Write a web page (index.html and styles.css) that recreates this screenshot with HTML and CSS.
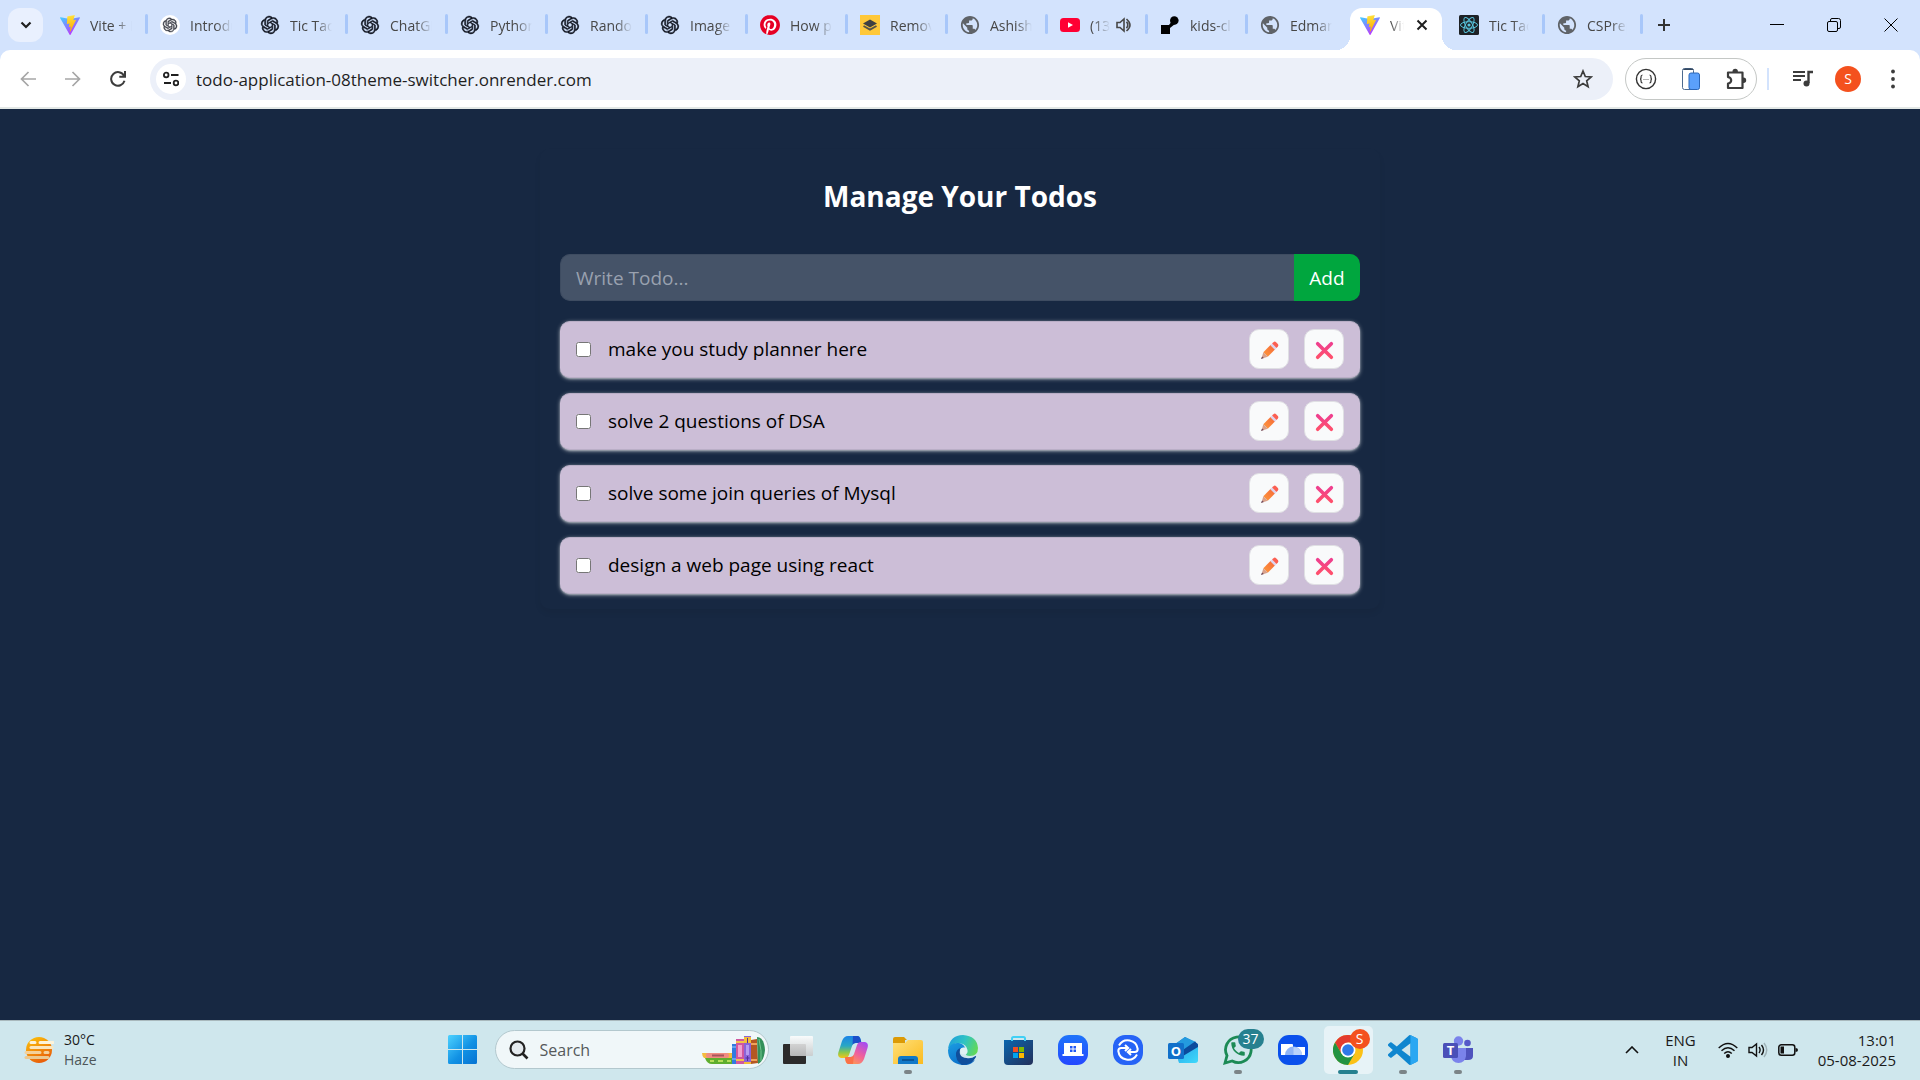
FILE: index.html
```html
<!DOCTYPE html>
<html lang="en">
<head>
<meta charset="utf-8">
<title>Manage Your Todos</title>
<link rel="stylesheet" href="styles.css">
</head>
<body>
<svg class="sprite" aria-hidden="true">
  <defs>
    <linearGradient id="g-vite" x1="0" y1="0" x2=".6" y2="1"><stop offset="0" stop-color="#41d1ff"/><stop offset="1" stop-color="#bd34fe"/></linearGradient>
    <linearGradient id="g-bolt" x1=".4" y1="0" x2=".5" y2="1"><stop offset="0" stop-color="#ffea83"/><stop offset=".1" stop-color="#ffdd35"/><stop offset="1" stop-color="#ffa800"/></linearGradient>
    <linearGradient id="g-pencil" x1="0" y1="1" x2="1" y2="0"><stop offset="0" stop-color="#ff9a3c"/><stop offset="1" stop-color="#f4663a"/></linearGradient>
    <linearGradient id="g-cross" x1="0" y1="0" x2="0" y2="1"><stop offset="0" stop-color="#ef3f8e"/><stop offset="1" stop-color="#ff4f6c"/></linearGradient>
    <linearGradient id="g-sun" x1="0" y1="0" x2=".5" y2="1"><stop offset="0" stop-color="#fdc70b"/><stop offset="1" stop-color="#e9600a"/></linearGradient>
    <linearGradient id="g-win" gradientUnits="userSpaceOnUse" x1="0" y1="0" x2="29" y2="29"><stop offset="0" stop-color="#4dd2ff"/><stop offset=".55" stop-color="#1191e4"/><stop offset="1" stop-color="#0672d2"/></linearGradient>
    <linearGradient id="g-cop1" x1="0" y1="0" x2="0" y2="1"><stop offset="0" stop-color="#1b84e8"/><stop offset=".45" stop-color="#29a7c4"/><stop offset=".75" stop-color="#8cc84b"/><stop offset="1" stop-color="#f5c518"/></linearGradient>
    <linearGradient id="g-cop2" x1=".8" y1="0" x2=".2" y2="1"><stop offset="0" stop-color="#a64df0"/><stop offset=".5" stop-color="#f0609c"/><stop offset="1" stop-color="#ffa04d"/></linearGradient>
    <linearGradient id="g-folder" x1="0" y1="0" x2="1" y2="1"><stop offset="0" stop-color="#ffe07a"/><stop offset="1" stop-color="#fbbb1e"/></linearGradient>
    <linearGradient id="g-edge1" x1="0" y1=".3" x2="1" y2=".6"><stop offset="0" stop-color="#1f9fdc"/><stop offset=".5" stop-color="#2fc3c4"/><stop offset="1" stop-color="#63d957"/></linearGradient>
    <linearGradient id="g-edge2" x1="0" y1="0" x2=".6" y2="1"><stop offset="0" stop-color="#1b9de2"/><stop offset="1" stop-color="#0a6cc8"/></linearGradient>
    <linearGradient id="g-store" x1="0" y1="0" x2="1" y2="1"><stop offset="0" stop-color="#0b66ae"/><stop offset="1" stop-color="#23305a"/></linearGradient>
    <linearGradient id="g-blue" x1="0" y1="0" x2="0" y2="1"><stop offset="0" stop-color="#1f74fa"/><stop offset="1" stop-color="#2448ff"/></linearGradient>
    <linearGradient id="g-out" x1="0" y1="0" x2="1" y2="1"><stop offset="0" stop-color="#28a9ea"/><stop offset="1" stop-color="#3fd9fb"/></linearGradient>
    <linearGradient id="g-task" x1="0" y1="0" x2="0" y2="1"><stop offset="0" stop-color="#fefefe"/><stop offset="1" stop-color="#c9cacb"/></linearGradient>
  </defs>
  <symbol id="vite" viewBox="0 0 256 257">
    <path fill="url(#g-vite)" d="M255.153 37.938L134.897 252.976c-2.483 4.44-8.862 4.466-11.382.048L.875 37.958c-2.746-4.814 1.371-10.646 6.827-9.67l120.385 21.517a6.537 6.537 0 0 0 2.322-.004l117.867-21.483c5.438-.991 9.574 4.796 6.877 9.62Z"/>
    <path fill="url(#g-bolt)" d="M185.432.063L96.44 17.501a3.268 3.268 0 0 0-2.634 3.014l-5.474 92.456a3.268 3.268 0 0 0 3.997 3.378l24.777-5.718c2.318-.535 4.413 1.507 3.936 3.838l-7.361 36.047c-.495 2.426 1.782 4.5 4.151 3.78l15.304-4.649c2.372-.72 4.652 1.36 4.15 3.788l-11.698 56.621c-.732 3.542 3.979 5.473 5.943 2.437l1.313-2.028l72.516-144.72c1.215-2.423-.88-5.186-3.54-4.672l-25.505 4.922c-2.396.462-4.435-1.77-3.759-4.114l16.646-57.705c.677-2.35-1.37-4.583-3.769-4.113Z"/>
  </symbol>
  <symbol id="knot" viewBox="-1.500 -1.500 27 27">
    <path d="M22.2819 9.8211a5.9847 5.9847 0 0 0-.5157-4.9108 6.0462 6.0462 0 0 0-6.5098-2.9A6.0651 6.0651 0 0 0 4.9807 4.1818a5.9847 5.9847 0 0 0-3.9977 2.9 6.0462 6.0462 0 0 0 .7427 7.0966 5.98 5.98 0 0 0 .511 4.9107 6.051 6.051 0 0 0 6.5146 2.9001A5.9847 5.9847 0 0 0 13.2599 24a6.0557 6.0557 0 0 0 5.7718-4.2058 5.9894 5.9894 0 0 0 3.9977-2.9001 6.0557 6.0557 0 0 0-.7475-7.0729zm-9.022 12.6081a4.4755 4.4755 0 0 1-2.8764-1.0408l.1419-.0804 4.7783-2.7582a.7948.7948 0 0 0 .3927-.6813v-6.7369l2.02 1.1686a.071.071 0 0 1 .038.052v5.5826a4.504 4.504 0 0 1-4.4945 4.4944zm-9.6607-4.1254a4.4708 4.4708 0 0 1-.5346-3.0137l.142.0852 4.783 2.7582a.7712.7712 0 0 0 .7806 0l5.8428-3.3685v2.3324a.0804.0804 0 0 1-.0332.0615L9.74 19.9502a4.4992 4.4992 0 0 1-6.1408-1.6464zM2.3408 7.8956a4.485 4.485 0 0 1 2.3655-1.9728V11.6a.7664.7664 0 0 0 .3879.6765l5.8144 3.3543-2.0201 1.1685a.0757.0757 0 0 1-.071 0l-4.8303-2.7865A4.504 4.504 0 0 1 2.3408 7.872zm16.5963 3.8558L13.1038 8.364 15.1192 7.2a.0757.0757 0 0 1 .071 0l4.8303 2.7913a4.4944 4.4944 0 0 1-.6765 8.1042v-5.6772a.79.79 0 0 0-.407-.667zm2.0107-3.0231l-.142-.0852-4.7735-2.7818a.7759.7759 0 0 0-.7854 0L9.409 9.2297V6.8974a.0662.0662 0 0 1 .0284-.0615l4.8303-2.7866a4.4992 4.4992 0 0 1 6.6802 4.66zM8.3065 12.863l-2.02-1.1638a.0804.0804 0 0 1-.038-.0567V6.0742a4.4992 4.4992 0 0 1 7.3757-3.4537l-.142.0805L8.704 5.459a.7948.7948 0 0 0-.3927.6813zm1.0976-2.3654l2.602-1.4998 2.6069 1.4998v2.9994l-2.5974 1.4997-2.6067-1.4997Z" fill="#10141f" stroke="#10141f" stroke-width=".7"/>
  </symbol>
  <symbol id="globe" viewBox="1 1 22 22"><path fill="#5f6368" d="M12 2C6.48 2 2 6.480 2 12s4.480 10 10 10 10-4.480 10-10S17.520 2 12 2zm-1 17.930c-3.950-.490-7-3.850-7-7.930 0-.620.080-1.210.210-1.790L9 15v1c0 1.100.9 2 2 2v1.930zm6.900-2.540c-.260-.810-1-1.390-1.900-1.390h-1v-3c0-.550-.450-1-1-1H8v-2h2c.550 0 1-.450 1-1V7h2c1.100 0 2-.9 2-2v-.410c2.930 1.190 5 4.060 5 7.410 0 2.080-.8 3.970-2.100 5.390z"/></symbol>
  <symbol id="pencil" viewBox="0 0 20 20">
    <path d="M3.500 11.800 8.200 16.500 16 8.700 11.300 4Z" fill="url(#g-pencil)"/>
    <path d="M3.500 11.800 8.200 16.500 1.500 18.700Z" fill="#d9a08a"/><path d="M2.200 16.200 4 17.900 1 19Z" fill="#6b4a5e"/>
    <path d="M10.900 4.400 15.600 9.100 17.400 7.300 12.700 2.600Z" fill="#dcd3ee"/>
    <path d="M12.700 2.600 14.200 1.200Q15.600 0 16.900 1.200L18.800 3.100Q20 4.500 18.800 5.900L17.400 7.300Z" fill="#fb5f52"/>
  </symbol>
  <symbol id="cross" viewBox="0 0 20 20"><path d="M2.800 2.800 17.200 17.200M17.200 2.800 2.800 17.200" fill="none" stroke="url(#g-cross)" stroke-width="3.800" stroke-linecap="round"/></symbol>
</svg>

<header class="browser">
  <div class="tabstrip">
    <button class="tab-search" aria-label="Search tabs"><svg width="12" height="8" viewBox="0 0 12 8"><path d="M1.500 1.500 6 6l4.500-4.500" fill="none" stroke="#1f1f1f" stroke-width="2.200"/></svg></button>
    <nav class="tabs" aria-label="Tabs">
      <button class="tab"><svg class="fav"><use href="#vite"/></svg><span class="tab-label">Vite + React</span></button>
      <button class="tab"><svg class="fav" viewBox="0 0 20 20"><circle cx="10" cy="10" r="10" fill="#fff"/><use href="#knot" x="2" y="2" width="16" height="16" opacity=".8"/></svg><span class="tab-label">Introduction</span></button>
      <button class="tab"><svg class="fav"><use href="#knot"/></svg><span class="tab-label">Tic Tac Toe</span></button>
      <button class="tab"><svg class="fav"><use href="#knot"/></svg><span class="tab-label">ChatGPT</span></button>
      <button class="tab"><svg class="fav"><use href="#knot"/></svg><span class="tab-label">Python</span></button>
      <button class="tab"><svg class="fav"><use href="#knot"/></svg><span class="tab-label">Random</span></button>
      <button class="tab"><svg class="fav"><use href="#knot"/></svg><span class="tab-label">Image</span></button>
      <button class="tab"><svg class="fav" viewBox="0 0 24 24"><circle cx="12" cy="12" r="11.500" fill="#fff"/><path fill="#e60023" d="M12.017 0C5.396 0 .029 5.367.029 11.987c0 5.079 3.158 9.417 7.618 11.162-.105-.949-.199-2.403.041-3.439.219-.937 1.406-5.957 1.406-5.957s-.359-.72-.359-1.781c0-1.663.967-2.911 2.168-2.911 1.024 0 1.518.769 1.518 1.688 0 1.029-.653 2.567-.992 3.992-.285 1.193.6 2.165 1.775 2.165 2.128 0 3.768-2.245 3.768-5.487 0-2.861-2.063-4.869-5.008-4.869-3.41 0-5.409 2.562-5.409 5.199 0 1.033.394 2.143.889 2.741.099.12.112.225.085.345-.09.375-.293 1.199-.334 1.363-.053.225-.172.271-.401.165-1.495-.69-2.433-2.878-2.433-4.646 0-3.776 2.748-7.252 7.92-7.252 4.158 0 7.392 2.967 7.392 6.923 0 4.135-2.607 7.462-6.233 7.462-1.214 0-2.354-.629-2.758-1.379l-.749 2.848c-.269 1.045-1.004 2.352-1.498 3.146 1.123.345 2.306.535 3.55.535 6.607 0 11.985-5.365 11.985-11.987C23.97 5.39 18.592.026 11.985.026L12.017 0z"/></svg><span class="tab-label">How p</span></button>
      <button class="tab"><svg class="fav" viewBox="0 0 20 20"><path fill="#ffc839" d="M0 0h20v20H0z"/><path fill="#3f4042" d="M10 4.500 17 8.500 10 12.500 3 8.500Z"/><path fill="none" stroke="#55524a" stroke-width="1.800" d="M3.500 11 10 14.600 16.500 11"/></svg><span class="tab-label">Remove</span></button>
      <button class="tab"><svg class="fav"><use href="#globe"/></svg><span class="tab-label">Ashish</span></button>
      <button class="tab"><svg class="fav" viewBox="0 0 20 20"><rect y="3" width="20" height="14" rx="3.500" fill="#ff0033"/><path d="M8 7.200 13 10 8 12.800Z" fill="#fff"/></svg><span class="tab-label">(135)</span><svg class="audio" width="16" height="16" viewBox="0 0 16 16" fill="none" stroke="#474747" stroke-width="1.600"><path d="M1 5.500h3L8 2v12L4 10.500H1Z"/><path d="M10.500 4.800q2.600 3.200 0 6.400M10.500 2q7 6 0 12"/></svg></button>
      <button class="tab"><svg class="fav" viewBox="0 0 20 20"><path d="M1 10h8l3-4 3 3-5 4v6H1Z"/><circle cx="14.300" cy="5.500" r="4.300"/></svg><span class="tab-label">kids-cl</span></button>
      <button class="tab last"><svg class="fav"><use href="#globe"/></svg><span class="tab-label">Edmanage</span></button>
      <button class="tab active" aria-current="page"><svg class="fav"><use href="#vite"/></svg><span class="tab-label">Vite</span><svg class="tab-x" width="12" height="12" viewBox="0 0 12 12"><path d="M1.500 1.500l9 9M10.500 1.500l-9 9" stroke="#1f1f1f" stroke-width="2"/></svg></button>
      <button class="tab"><svg class="fav" viewBox="0 0 20 20"><rect width="20" height="20" rx="1.500" fill="#1d2125"/><g fill="none" stroke="#58c4dc"><ellipse cx="10" cy="10" rx="8.500" ry="3.300"/><ellipse cx="10" cy="10" rx="8.500" ry="3.300" transform="rotate(60 10 10)"/><ellipse cx="10" cy="10" rx="8.500" ry="3.300" transform="rotate(120 10 10)"/></g><circle cx="10" cy="10" r="1.600" fill="#58c4dc"/></svg><span class="tab-label">Tic Tac Toe</span></button>
      <button class="tab"><svg class="fav"><use href="#globe"/></svg><span class="tab-label">CSPrep</span></button>
    </nav>
    <button class="newtab" aria-label="New tab"><svg width="14" height="14" viewBox="0 0 14 14"><path d="M7 1v12M1 7h12" stroke="#333" stroke-width="2"/></svg></button>
    <div class="window-buttons">
      <button aria-label="Minimize"><svg width="14" height="14" viewBox="0 0 14 14"><path d="M0 6.500h14" stroke="#000"/></svg></button>
      <button aria-label="Restore"><svg width="14" height="14" viewBox="0 0 14 14" fill="none" stroke="#000"><rect x=".5" y="3.500" width="10" height="10" rx="1.500"/><path d="M3.500 3V2Q3.500.5 5 .5h6.500q2 0 2 2V9q0 1.500-1.500 1.500h-1"/></svg></button>
      <button aria-label="Close"><svg width="14" height="14" viewBox="0 0 14 14"><path d="M.5.5l13 13M13.500.5l-13 13" stroke="#000"/></svg></button>
    </div>
  </div>
  <div class="toolbar">
    <div class="nav-buttons">
      <button aria-label="Back"><svg width="16" height="16" viewBox="0 0 16 16" fill="none" stroke="#a6a6a6" stroke-width="1.700"><path d="M16 8H1.500M8.500 1 1.500 8l7 7"/></svg></button>
      <button aria-label="Forward"><svg width="16" height="16" viewBox="0 0 16 16" fill="none" stroke="#a6a6a6" stroke-width="1.700"><path d="M0 8h14.500M7.500 1l7 7-7 7"/></svg></button>
      <button aria-label="Reload"><svg width="16" height="16" viewBox="0 0 16 16" fill="none" stroke="#3c3c3c" stroke-width="2"><path d="M14.500 9.800A6.800 6.800 0 1 1 14 4.800M15 0v5.700H9.300"/></svg></button>
    </div>
    <div class="omnibox">
      <button class="site-info" aria-label="Site information"><svg width="16" height="16" viewBox="0 0 16 16" fill="none" stroke="#1f1f1f" stroke-width="1.800"><circle cx="3.200" cy="4" r="2.300"/><path d="M8 4h7.500M1 12h7"/><circle cx="13" cy="12" r="2.300"/></svg></button>
      <input class="url" type="text" aria-label="Address" value="todo-application-08theme-switcher.onrender.com">
      <button class="star" aria-label="Bookmark"><svg width="20" height="20" viewBox="0 0 20 20"><path d="M10 2l2.300 5.500 5.900.5-4.500 3.900 1.400 5.800L10 14.600l-5.100 3.100 1.400-5.800L1.800 8l5.900-.5Z" fill="none" stroke="#3c3c3c" stroke-width="1.700"/></svg></button>
    </div>
    <div class="extensions">
      <button aria-label="JSON viewer"><svg width="22" height="22" viewBox="0 0 22 22"><circle cx="11" cy="11" r="9.600" fill="none" stroke="#333" stroke-width="1.400"/><path d="M7.500 7q-1.500 0-1.500 2v1q0 1-1 1 1 0 1 1v1q0 2 1.500 2M14.500 7q1.500 0 1.500 2v1q0 1 1 1-1 0-1 1v1q0 2-1.500 2" fill="none" stroke="#333" stroke-width="1.200"/><path d="M8.500 11.500h1m1 0h1m1 0h1" stroke="#666"/></svg></button>
      <button aria-label="Mobile simulator"><svg width="18" height="22" viewBox="0 0 18 22"><rect x=".5" y=".5" width="11" height="21" rx="2" fill="#fff" stroke="#4c6a8f"/><path d="M1 2.500Q1 .5 3 .5h7q1.500 0 1.500 1.500H1Z" fill="#33475f"/><rect x="7" y="5" width="10.500" height="16.500" rx="2" fill="#5ba0fb" stroke="#2b66b8"/></svg></button>
      <button aria-label="Extensions"><svg width="22" height="22" viewBox="0 0 22 22"><path d="M3 4.500h14.500V20H3v-4.500a3.200 3.200 0 0 0 0-6.400Z" fill="none" stroke="#3c3c3c" stroke-width="2.200" stroke-linejoin="round"/><path d="M7.500 4.500v-1a2.700 2.700 0 0 1 5.400 0v1ZM17.500 9.500h1a2.700 2.700 0 0 1 0 5.400h-1Z" fill="#3c3c3c"/></svg></button>
    </div>
    <span class="divider"></span>
    <div class="tools">
      <button aria-label="Media controls"><svg width="20" height="18" viewBox="0 0 20 18"><path d="M0 2h12M0 6h12M0 10h8" stroke="#3c3c3c" stroke-width="2"/><path d="M15.500 13V2H20" fill="none" stroke="#3c3c3c" stroke-width="2.400"/><circle cx="13.500" cy="13.500" r="3" fill="#3c3c3c"/></svg></button>
      <button class="avatar" aria-label="Profile">S</button>
      <button aria-label="Menu"><svg width="4" height="20" viewBox="0 0 4 20" fill="#3c3c3c"><circle cx="2" cy="2.500" r="1.900"/><circle cx="2" cy="10" r="1.900"/><circle cx="2" cy="17.500" r="1.900"/></svg></button>
    </div>
  </div>
</header>

<main class="page">
  <section class="card">
    <h1 class="title">Manage Your Todos</h1>
    <form class="todo-form">
      <input class="todo-input" type="text" placeholder="Write Todo..." aria-label="Write Todo">
      <button class="add" type="button">Add</button>
    </form>
    <ul class="todos">
      <li class="todo"><input type="checkbox" id="t1"><label for="t1">make you study planner here</label><button class="act" aria-label="Edit"><svg><use href="#pencil"/></svg></button><button class="act" aria-label="Delete"><svg><use href="#cross"/></svg></button></li>
      <li class="todo"><input type="checkbox" id="t2"><label for="t2">solve 2 questions of DSA</label><button class="act" aria-label="Edit"><svg><use href="#pencil"/></svg></button><button class="act" aria-label="Delete"><svg><use href="#cross"/></svg></button></li>
      <li class="todo"><input type="checkbox" id="t3"><label for="t3">solve some join queries of Mysql</label><button class="act" aria-label="Edit"><svg><use href="#pencil"/></svg></button><button class="act" aria-label="Delete"><svg><use href="#cross"/></svg></button></li>
      <li class="todo"><input type="checkbox" id="t4"><label for="t4">design a web page using react</label><button class="act" aria-label="Edit"><svg><use href="#pencil"/></svg></button><button class="act" aria-label="Delete"><svg><use href="#cross"/></svg></button></li>
    </ul>
  </section>
</main>

<footer class="taskbar">
  <button class="weather">
    <svg width="30" height="28" viewBox="0 0 30 28"><circle cx="15" cy="14" r="13" fill="url(#g-sun)"/><g stroke-width="3" stroke-linecap="round"><path d="M7 6.500h4M16 6.500h13" stroke="#fdf3d9"/><path d="M7 11.500h21" stroke="#fbe6bd"/><path d="M2 16.500h14M21 16.500h3" stroke="#f4d09a"/><path d="M2 21.500h22" stroke="#ecc890"/></g></svg>
    <span class="two-line"><span>30°C</span><span class="muted">Haze</span></span>
  </button>
  <div class="apps">
    <button class="app" aria-label="Start"><svg width="29" height="29" viewBox="0 0 29 29" fill="url(#g-win)"><path d="M0 1.500Q0 0 1.500 0H14v14H0ZM15 0h12.500Q29 0 29 1.500V14H15ZM0 15h14v14H1.500Q0 29 0 27.500ZM15 15h14v12.500q0 1.500-1.500 1.500H15Z"/></svg></button>
    <div class="search">
      <svg width="20" height="20" viewBox="0 0 20 20"><circle cx="8.500" cy="8.500" r="7" fill="#e4eaee" stroke="#222" stroke-width="2.200"/><path d="M13.500 13.500l5 5" stroke="#222" stroke-width="2.600"/></svg>
      <input type="text" placeholder="Search" aria-label="Search">
      <svg width="63" height="30" viewBox="0 0 63 30">
        <path d="M3 23h27v6H10q-5 0-7-6Z" fill="#5fae2e"/><path d="M8 26h4m4 0h5m4 0h4" stroke="#b5dd5a" stroke-width="2"/>
        <path d="M0 18h30v5H2q-2-2-2-5Z" fill="#f4bb3f"/><rect x="4" y="18" width="23" height="5" rx="2" fill="#f08c82"/><path d="M10 20.500h12" stroke="#a8545c" stroke-width="2"/>
        <rect x="30" y="9" width="4" height="20" fill="#2f7be0"/><path d="M30 12h4m-4 12h4" stroke="#9cc9ff"/>
        <rect x="34" y="4" width="8" height="25" fill="#d0579f"/><path d="M34 7h8m-8 18h8" stroke="#f2c24c" stroke-width="2"/><rect x="36" y="10" width="4" height="12" fill="#f2a0cf"/>
        <rect x="42" y="1" width="7" height="28" fill="#8b63d8"/><path d="M42 2h7v6h-7zM42 27h7v2h-7z" fill="#f3bd38"/><path d="M45.500 3v5m-2 15h4m-2-2v5" stroke="#53309c"/><rect x="44" y="10" width="3" height="10" fill="#b59af0"/>
        <path d="M49 5l6-1 1 24-7 1Z" fill="#b45722"/><path d="M49 9h6m-6 16h6" stroke="#f0a35a" stroke-width="2"/>
        <path d="M55 2q7 0 8 13-1 11-7 14Z" fill="#34905a"/><path d="M57 4q3 12 2 22" fill="none" stroke="#73c78d"/>
      </svg>
    </div>
    <button class="app" aria-label="Task view"><svg width="30" height="28" viewBox="0 0 30 28"><rect y="8" width="23" height="20" rx="1" fill="#2c2b2b"/><rect x="7" width="23" height="20" rx="1" fill="url(#g-task)" opacity=".88"/></svg></button>
    <button class="app" aria-label="Copilot"><svg width="30" height="28" viewBox="0 0 30 28"><path d="M10 0h9q3 0 3.500 3l.5 4h-5q-3 0-4 3l-3 9q-1 3-4 3H3q-4-1-2.500-6L4 5q2-5 6-5Z" fill="url(#g-cop1)"/><path d="M15 0h5q2.500 1 3.500 7h-6q-2 0-3 2Z" fill="#1b4fc9"/><path d="M20 28h-9q-3 0-3.500-3L7 21h5q3 0 4-3l3-9q1-3 4-3h4q4 1 2.500 6L26 23q-2 5-6 5Z" fill="url(#g-cop2)"/><path d="M15 28h-5q-2.500-1-3-7h6q2 0 3-2Z" fill="#fa7148"/></svg></button>
    <button class="app open" aria-label="File Explorer"><svg width="30" height="28" viewBox="0 0 30 28"><path d="M0 3q0-2 2-2h9l3 3h-2v3H0Z" fill="#dc9a06"/><path d="M0 7h12l3-3h13q2 0 2 2v22H0Z" fill="url(#g-folder)"/><path d="M5 28v-5q0-3 3-3h14q3 0 3 3v5Z" fill="#1179c8"/><path d="M9 24h12" stroke="#0a4d8c" stroke-width="1.600"/></svg></button>
    <button class="app" aria-label="Edge"><svg width="30" height="30" viewBox="0 0 30 30"><path d="M0 14Q2 0 15 0q14 1 15 13 0 8-8 8-5 0-4-3 3-6-3-9Q6 6 0 14Z" fill="url(#g-edge1)"/><path d="M0 15q2-8 11-7 5 1 6 5-6-1-6 5 1 8 10 9 3 0 6-2-5 6-13 5Q0 28 0 15Z" fill="url(#g-edge2)"/><path d="M12.500 13q-3 9 6 10 5 1 9-2 1 0 .5 1-4 8-14 8Q7 25 8 18q1-4 4.500-5Z" fill="#104f9c"/><circle cx="16" cy="16" r="3.600" fill="#dff1f4"/></svg></button>
    <button class="app" aria-label="Microsoft Store"><svg width="29" height="30" viewBox="0 0 29 30"><path d="M0 5h29v21q0 4-4 4H4q-4 0-4-4Z" fill="url(#g-store)"/><path d="M9 12h5v5H9z" fill="#f25022"/><path d="M15 12h5v5h-5z" fill="#7fba00"/><path d="M9 18h5v5H9z" fill="#00a4ef"/><path d="M15 18h5v5h-5z" fill="#ffb900"/><path d="M8 6V3.500Q8 2 9.500 2h10Q21 2 21 3.500V6" fill="none" stroke="#41d0f5" stroke-width="2"/></svg></button>
    <button class="app" aria-label="PC tools"><svg width="30" height="30" viewBox="0 0 30 30"><rect width="30" height="30" rx="11" fill="url(#g-blue)"/><path d="M6 8h18v11h1.500v2h-21v-2H6Z" fill="#fff"/><path d="M12 11h2.500v2.500H12zM15.500 11H18v2.500h-2.500zM12 14.500h2.500V17H12zM15.500 14.500H18V17h-2.500z" fill="#2158f5"/></svg></button>
    <button class="app" aria-label="Smart switch"><svg width="30" height="30" viewBox="0 0 30 30"><rect width="30" height="30" rx="12" fill="#2663f6"/><g fill="none" stroke="#fff" stroke-width="2"><path d="M6 10.500a10 10 0 0 1 18.700 3.500q0 3-3 3H15M24 19.500A10 10 0 0 1 5.300 16q0-3 3-3H15"/><path d="M12 10l3.200 3-3.200 3M18 14l-3.200 3 3.200 3"/></g></svg></button>
    <button class="app" aria-label="Outlook"><svg width="30" height="28" viewBox="0 0 30 28"><path d="M7 8 17 1l13 7v15q0 3-3 3H11Z" fill="#1a7ed2"/><path d="M9 7 17 1l11 5-14 9Z" fill="#249bdf"/><path d="M12 16 27 5.500l3 3V13L16 22Z" fill="#0b4a9c"/><path d="M30 11v13q0 3-3 3H11l-1-4Z" fill="url(#g-out)"/><rect y="7" width="16" height="16" rx="1.500" fill="#1170ca"/><text x="8" y="19.500" text-anchor="middle" class="logo-letter">O</text></svg></button>
    <button class="app open" aria-label="WhatsApp"><svg width="30" height="30" viewBox="0 0 30 30"><path d="M2 28l2-7.300A12.800 12.800 0 1 1 9.200 26Z" fill="none" stroke="#1c8a55" stroke-width="2.800"/><g transform="translate(6 5) scale(.75)"><path d="M6.620 10.790c1.440 2.830 3.760 5.140 6.590 6.590l2.200-2.200c.270-.270.670-.360 1.020-.240 1.120.370 2.330.570 3.570.570.550 0 1 .450 1 1V20c0 .550-.450 1-1 1-9.390 0-17-7.610-17-17 0-.550.450-1 1-1h3.500c.550 0 1 .450 1 1 0 1.250.200 2.450.570 3.570.110.350.030.740-.250 1.020l-2.200 2.200z" fill="#1c8a55"/></g></svg><span class="badge count">37</span></button>
    <button class="app" aria-label="Storage"><svg width="30" height="30" viewBox="0 0 30 30"><rect width="30" height="30" rx="11" fill="#0a50ec"/><path d="M3 9h11q1 0 1 1v2h12v8H3Z" fill="#fff"/><path d="M7 20a8.500 8.500 0 0 1 17 0Z" fill="#8fb4f7"/><path d="M15.500 12v8H24a8.500 8.500 0 0 0-8.500-8Z" fill="#b9d2fb"/></svg></button>
    <button class="app open current" aria-label="Chrome"><svg width="30" height="30" viewBox="0 0 30 30"><circle cx="15" cy="15" r="15" fill="#fbc116"/><path d="M2 7.500A15 15 0 0 1 28 7.500H15L8.500 18.700Z" fill="#e33b2e"/><path d="M2 7.500A15 15 0 0 0 15 30l6.500-11.300H8.500Z" fill="#229342"/><circle cx="15" cy="15" r="7.500" fill="#fff"/><circle cx="15" cy="15" r="5.800" fill="#2f79e8"/></svg><span class="badge user">S</span></button>
    <button class="app open" aria-label="VS Code"><svg width="30" height="30" viewBox="0 0 24 24"><path fill="#0f86cf" d="M23.15 2.587L18.21.21a1.494 1.494 0 0 0-1.705.29l-9.46 8.63-4.12-3.128a.999.999 0 0 0-1.276.057L.327 7.261A1 1 0 0 0 .326 8.74L3.899 12 .326 15.26a1 1 0 0 0 .001 1.479L1.65 17.94a.999.999 0 0 0 1.276.057l4.12-3.128 9.46 8.63a1.492 1.492 0 0 0 1.704.29l4.942-2.377A1.500 1.500 0 0 0 24 20.06V3.939a1.500 1.500 0 0 0-.85-1.352zm-5.146 14.861L10.826 12l7.178-5.448v10.896z"/><path fill="#2ba7f2" d="M18 .1 23.150 2.587q.85.400.85 1.352V20.060q0 .950-.850 1.350L18 23.900Z"/></svg></button>
    <button class="app open" aria-label="Teams"><svg width="30" height="28" viewBox="0 0 30 28"><circle cx="24.500" cy="7" r="3.300" fill="#5558c8"/><path d="M20 12h10v8q0 4-5 4h-5Z" fill="#4f53bd"/><circle cx="15.500" cy="5" r="4.700" fill="#7b83eb"/><path d="M8 12h15v8q-1 7-7.500 7T8 20Z" fill="#7b83eb"/><rect y="7" width="15" height="15" rx="1.500" fill="#4a50b8"/><text x="7.500" y="19" text-anchor="middle" class="logo-letter">T</text></svg></button>
  </div>
  <div class="tray">
    <button aria-label="Hidden icons"><svg width="14" height="8" viewBox="0 0 14 8"><path d="M1 7l6-6 6 6" fill="none" stroke="#111" stroke-width="1.600"/></svg></button>
    <button class="two-line lang"><span>ENG</span><span>IN</span></button>
    <button class="status" aria-label="Network, sound, battery">
      <svg width="20" height="16" viewBox="0 0 20 16" fill="none" stroke="#111" stroke-width="1.400"><path d="M.7 6q9.300-9 18.600 0M3.500 8.800q6.500-6.300 13 0M6.200 11.500q3.800-3.700 7.600 0"/><circle cx="10" cy="14" r="1.300" fill="#111"/></svg>
      <svg width="20" height="16" viewBox="0 0 20 16" fill="none" stroke="#111" stroke-width="1.400"><path d="M1 5.500h3L8.500 2v12L4 10.500H1Z"/><path d="M11 5q2.200 3 0 6M13.500 3q4 5 0 10"/><path d="M16 1q5.500 7 0 14" stroke="#9fb2b7"/></svg>
      <svg width="20" height="14" viewBox="0 0 20 14"><rect x=".8" y="1.800" width="16" height="10.500" rx="2.500" fill="none" stroke="#111" stroke-width="1.500"/><path d="M2.500 3.500h3.500v7H2.500ZM17.500 5q2.500 0 2.500 2t-2.500 2Z" fill="#111"/></svg>
    </button>
    <button class="two-line clock"><span>13:01</span><span>05-08-2025</span></button>
  </div>
</footer>
</body>
</html>
```
FILE: styles.css
```css
* { box-sizing: border-box; }

body {
  margin: 0;
  min-height: 100vh;
  display: flex;
  flex-direction: column;
  background: #172842;
  font-family: "Open Sans", "Noto Sans", sans-serif;
  font-size: 14px;
}

button, input { font: inherit; color: inherit; }
button { border: 0; padding: 0; background: none; }
svg { display: block; flex: none; }
.sprite { position: absolute; width: 0; height: 0; }

/* Browser chrome */
.browser { background: #d3e3fd; }

.tabstrip {
  display: flex;
  align-items: center;
  height: 50px;
  padding-left: 8px;
}

.tab-search {
  display: grid;
  place-items: center;
  width: 35px;
  height: 34px;
  margin-right: 5px;
  border-radius: 12px;
  background: #e9f0fe;
}

.tabs { display: flex; align-self: stretch; min-width: 0; }

.tab {
  position: relative;
  display: flex;
  align-items: center;
  width: 100px;
  min-width: 0;
  padding: 0 16px 0 12px;
  color: #474747;
  text-align: left;
}

.tab::after {
  content: "";
  position: absolute;
  right: 0;
  top: 14px;
  width: 3px;
  height: 20px;
  border-radius: 2px;
  background: #a8c7fa;
}

.tab.last::after, .tab.active::after { display: none; }
.fav { width: 20px; height: 20px; margin-right: 10px; }

.tab-label {
  flex: 1;
  min-width: 0;
  overflow: hidden;
  padding-top: 1px;
  white-space: nowrap;
  line-height: 20px;
  mask-image: linear-gradient(to right, #000 calc(100% - 16px), transparent);
}

.tab .audio { margin: 0 0 0 6px; }

.tab.active {
  width: 92px;
  margin: 8px 5px 0 2px;
  padding: 0 14px 8px 10px;
  border-radius: 12px 12px 0 0;
  background: #fff;
  color: #1f1f1f;
}

.tab.active::before {
  content: "";
  position: absolute;
  left: -14px;
  right: -14px;
  bottom: 0;
  height: 14px;
  background:
    radial-gradient(circle at 0 0, transparent 14px, #fff 14px) left / 14px 14px no-repeat,
    radial-gradient(circle at 100% 0, transparent 14px, #fff 14px) right / 14px 14px no-repeat;
}

.tab.active ~ .tab { width: 98px; }
.tab-x { margin-left: 12px; }
.newtab { margin-left: 14px; }

.window-buttons {
  display: flex;
  gap: 43px;
  margin-left: auto;
  padding-right: 22px;
}

.toolbar {
  display: flex;
  align-items: center;
  height: 59px;
  padding: 0 25px 0 20px;
  border-bottom: 2px solid #e3e8e6;
  border-radius: 10px 10px 0 0;
  background: #fff;
}

.nav-buttons { display: flex; gap: 29px; margin-right: 24px; }

.omnibox {
  display: flex;
  align-items: center;
  flex: 1;
  height: 42px;
  padding: 0 20px 0 6px;
  border-radius: 21px;
  background: #ecf0f9;
}

.site-info {
  display: grid;
  place-items: center;
  width: 30px;
  height: 30px;
  margin-right: 10px;
  border-radius: 50%;
  background: #fff;
}

.url {
  flex: 1;
  min-width: 0;
  padding: 2px 0 0;
  border: 0;
  outline: 0;
  background: none;
  color: #1f1f1f;
  font-size: 17px;
}

.extensions {
  display: flex;
  align-items: center;
  gap: 25px;
  height: 42px;
  margin-left: 12px;
  padding: 0 9px;
  border: 1px solid #c4c7c5;
  border-radius: 21px;
}

.divider { width: 2px; height: 22px; margin: 0 24px 0 10px; background: #d3e3fd; }
.tools { display: flex; align-items: center; gap: 30px; }
.tools .avatar { margin: 0 0 0 -8px; }

.avatar {
  width: 26px;
  height: 26px;
  border-radius: 50%;
  background: #f4511e;
  color: #fff;
}

/* Todo page */
.page { flex: 1; padding: 40px 20px; }

.card {
  max-width: 840px;
  margin: 0 auto;
  padding: 15px 20px;
  border-radius: 10px;
  box-shadow: 0 4px 6px rgba(0, 0, 0, .06);
  color: #fff;
}

.title {
  margin: 12px 0 38px;
  font-size: 28px;
  line-height: 40px;
  text-align: center;
}

.todo-form { display: flex; height: 47px; margin-bottom: 20px; font-size: 19px; }

.todo-input {
  flex: 1;
  min-width: 0;
  padding: 0 15px;
  border: 1px solid #3e4c61;
  border-right-width: 0;
  border-radius: 10px 0 0 10px;
  outline: 0;
  background: #455368;
}

.todo-input::placeholder { color: #99a1af; opacity: 1; }
.add { width: 66px; border-radius: 0 10px 10px 0; background: #00a63e; color: #fff; }

.todos {
  display: grid;
  gap: 15px;
  margin: 0;
  padding: 0;
  list-style: none;
}

.todo {
  display: flex;
  align-items: center;
  gap: 15px;
  height: 57px;
  padding: 0 16px 1px;
  border: 1px solid #b9aec6;
  border-width: 1px 0;
  border-radius: 10px;
  background: #ccbed7;
  box-shadow: 0 1px 4px rgba(255, 255, 255, .5), 0 1px 2px rgba(255, 255, 255, .4);
  color: #000;
  font-size: 19px;
}

.todo input { width: 15px; height: 15px; margin: 0 2px 0 0; }
.todo label { flex: 1; }

.act {
  display: grid;
  place-items: center;
  width: 40px;
  height: 40px;
  padding-top: 3px;
  border: 1px solid #dfdfe3;
  border-radius: 10px;
  background: #f9fafb;
}

.act svg { width: 19px; height: 19px; }

/* Desktop taskbar */
.taskbar {
  display: grid;
  grid-template-columns: 1fr auto 1fr;
  align-items: center;
  height: 60px;
  padding: 0 24px 2px;
  border-top: 1px solid #a9b9bd;
  background: #cfe7ed;
  color: #1a1a1a;
}

.weather { display: flex; align-items: center; gap: 10px; justify-self: start; text-align: left; }
.two-line { display: flex; flex-direction: column; line-height: 20px; }
.muted { color: #4d5659; }
.apps { display: flex; align-items: center; }

.app {
  position: relative;
  display: grid;
  place-items: center;
  width: 55px;
  height: 48px;
}

.app.open::after {
  content: "";
  position: absolute;
  left: 50%;
  bottom: 0;
  width: 8px;
  height: 4px;
  margin-left: -4px;
  border-radius: 2px;
  background: #7b8487;
}

.app.current { width: 49px; margin: 0 3px; border-radius: 5px; background: #e7f3f7; }
.app.current::after { width: 20px; margin-left: -10px; background: #26808f; }

.badge {
  position: absolute;
  top: 3px;
  display: grid;
  place-items: center;
  height: 20px;
  border-radius: 10px;
  color: #fff;
}

.count { right: 2px; width: 26px; background: #26808f; }
.user { right: 3px; width: 20px; background: #f4511e; }
.logo-letter { fill: #fff; font-size: 13px; font-weight: 700; }

.search {
  display: flex;
  align-items: center;
  width: 274px;
  height: 39px;
  margin: 0 2px 0 5px;
  padding: 0 3px 0 13px;
  border: 1px solid #b3c8ce;
  border-radius: 20px;
  background: #f0f7f9;
}

.search input {
  flex: 1;
  min-width: 0;
  padding: 0 0 0 11px;
  border: 0;
  outline: 0;
  background: none;
  font-size: 16px;
}

.search input::placeholder { color: #55595b; opacity: 1; }
.tray { display: flex; align-items: center; justify-self: end; font-size: 15px; }
.lang { align-items: center; margin: 0 22px 0 26px; }
.status { display: flex; align-items: center; gap: 10px; margin-right: 20px; }
.clock { align-items: flex-end; }
```
